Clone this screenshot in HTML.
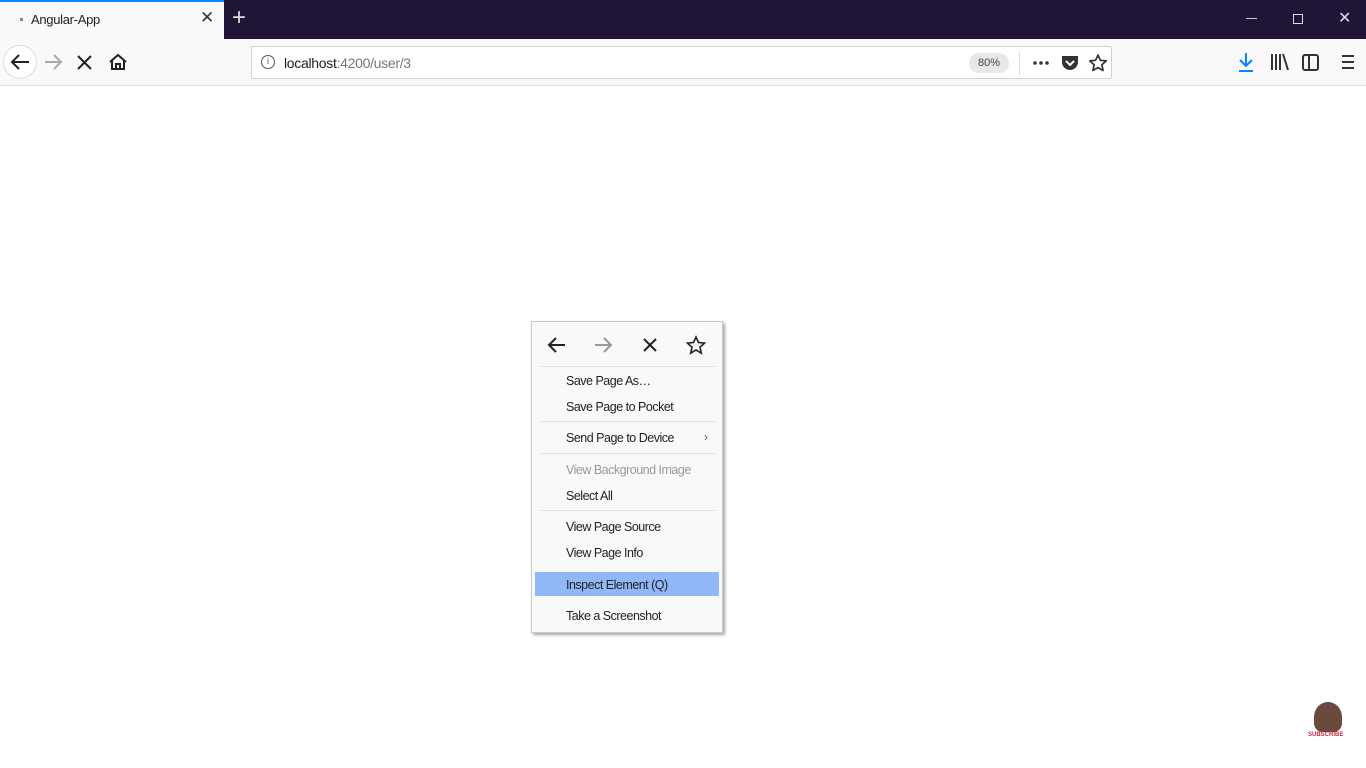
<!DOCTYPE html>
<html><head><meta charset="utf-8"><style>
*{margin:0;padding:0;box-sizing:border-box}
body{width:1366px;height:768px;overflow:hidden;background:#fff;font-family:"Liberation Sans",sans-serif;position:relative}
.tb{position:absolute;left:0;top:0;width:1366px;height:39px;background:#201537}
.tab{position:absolute;left:0;top:0;width:224px;height:39px;background:#f9f9fa;border-top:2px solid #0a84ff}
.nav{position:absolute;left:0;top:39px;width:1366px;height:47px;background:#f9f9fa;border-bottom:1px solid #e0e0e2}
.url{position:absolute;left:251px;top:46px;width:861px;height:33px;background:#fff;border:1px solid #d0d0d4;border-radius:2px}
.ab{position:absolute}
.menu{position:absolute;left:531px;top:321px;width:192px;height:312px;background:#f9f9f9;border:1px solid #c8c8c8;box-shadow:2px 2px 3px rgba(0,0,0,.35)}
.it{position:absolute;left:34px;font-size:12.5px;color:#222;letter-spacing:-.5px}
.sep{position:absolute;left:8px;width:176px;height:1px;background:#e0e0e0}
</style></head><body>
<div class="tb"></div>
<div class="tab">
<div class="ab" style="left:20px;top:16px;width:3px;height:3px;background:#888"></div>
<div class="ab" style="left:31px;top:10px;font-size:13px;color:#222;letter-spacing:-.3px">Angular-App</div>
<div class="ab" style="left:200px;top:6px;font-size:17px;color:#333">✕</div>
</div>
<div class="ab" style="left:232px;top:4px;font-size:24px;color:#ddd">+</div>
<div class="ab" style="left:1246px;top:18px;width:11px;height:1px;background:#ccc"></div>
<div class="ab" style="left:1293px;top:14px;width:10px;height:10px;border:1.5px solid #ddd"></div>
<div class="ab" style="left:1338px;top:8px;font-size:16px;color:#ddd">✕</div>
<div class="nav"></div>
<div class="ab" style="left:3px;top:45px;width:34px;height:34px;border-radius:50%;border:1px solid #ddd;background:#fff"></div>
<svg class="ab" style="left:0;top:39px" width="140" height="47"><g fill="none" stroke-width="2">
<path d="M29 23H12M19 16l-7 7 7 7" stroke="#222"/>
<path d="M61 23H45M54 16l7 7-7 7" stroke="#aaa"/>
<path d="M78 17l13 13M91 17L78 30" stroke="#222"/>
<path d="M110 23l8-7 8 7M112 21v9h12v-9M116 30v-5h4v5" stroke="#222"/></g></svg>
<div class="url">
<div class="ab" style="left:9px;top:8px;width:14px;height:14px;border:1.5px solid #555;border-radius:50%;font-size:9px;text-align:center;line-height:11px;color:#555">i</div>
<div class="ab" style="left:32px;top:8px;font-size:14px;color:#222;letter-spacing:-.3px">localhost<span style="color:#777">:4200/user/3</span></div>
<div class="ab" style="left:717px;top:6px;width:40px;height:20px;background:#e8e8ea;border-radius:10px;font-size:11px;color:#444;text-align:center;line-height:20px">80%</div>
<div class="ab" style="left:767px;top:4px;width:1px;height:24px;background:#ddd"></div>
<svg class="ab" style="left:780px;top:10px" width="20" height="12"><circle cx="3" cy="6" r="1.8" fill="#333"/><circle cx="9" cy="6" r="1.8" fill="#333"/><circle cx="15" cy="6" r="1.8" fill="#333"/></svg>
<svg class="ab" style="left:808px;top:6px" width="20" height="20"><path d="M2 3h16v6a8 8 0 0 1-16 0z" fill="#333"/><path d="M6 8l4 4 4-4" stroke="#fff" stroke-width="2" fill="none"/></svg>
<svg class="ab" style="left:836px;top:6px" width="20" height="20"><path d="M10 2l2.4 5.3 5.8.6-4.3 3.9 1.2 5.7L10 14.6l-5.1 2.9 1.2-5.7L1.8 7.9l5.8-.6z" fill="none" stroke="#333" stroke-width="1.7" stroke-linejoin="round"/></svg>
</div>
<svg class="ab" style="left:1236px;top:51px" width="120" height="24"><g fill="none" stroke-width="2">
<path d="M10 2v13M4 9l6 6 6-6M3 20h14" stroke="#0a84ff"/>
<path d="M36 3v16M40 3v16M44 3v16M47 3l5 16" stroke="#333"/>
<rect x="67" y="4" width="15" height="15" rx="2" stroke="#333"/><path d="M73 4v15" stroke="#333"/>
<path d="M106 5h12M106 11h12M106 17h12" stroke="#333"/></g></svg>
<div class="menu">
<svg class="ab" style="left:0;top:0" width="192" height="45"><g fill="none" stroke-width="2">
<path d="M33 23H17M24 16l-7 7 7 7" stroke="#222"/>
<path d="M79 23H63M72 16l7 7-7 7" stroke="#999"/>
<path d="M112 17l12 12M124 17l-12 12" stroke="#222"/>
<path d="M164 15l2.5 5.5 6 .6-4.5 4 1.3 6-5.3-3.2-5.3 3.2 1.3-6-4.5-4 6-.6z" stroke="#222" stroke-width="1.6"/></g></svg>
<div class="sep" style="top:44px"></div>
<div class="it" style="top:52px">Save Page As…</div>
<div class="it" style="top:78px">Save Page to Pocket</div>
<div class="sep" style="top:99px"></div>
<div class="it" style="top:109px">Send Page to Device</div>
<div class="ab" style="left:172px;top:108px;font-size:12px;color:#555">›</div>
<div class="sep" style="top:131px"></div>
<div class="it" style="top:141px;color:#999">View Background Image</div>
<div class="it" style="top:167px">Select All</div>
<div class="sep" style="top:188px"></div>
<div class="it" style="top:198px">View Page Source</div>
<div class="it" style="top:224px">View Page Info</div>
<div class="ab" style="left:3px;top:250px;width:184px;height:24px;background:#90b8f8"></div>
<div class="it" style="top:256px">Inspect Element (Q)</div>
<div class="it" style="top:287px">Take a Screenshot</div>
</div>
<div class="ab" style="left:1314px;top:702px;width:28px;height:30px;background:#6a4a3a;border-radius:50% 50% 30% 30%"></div>
<div class="ab" style="left:1308px;top:732px;font-size:6px;color:#c03040;font-weight:bold">SUBSCRIBE</div>
</body></html>
